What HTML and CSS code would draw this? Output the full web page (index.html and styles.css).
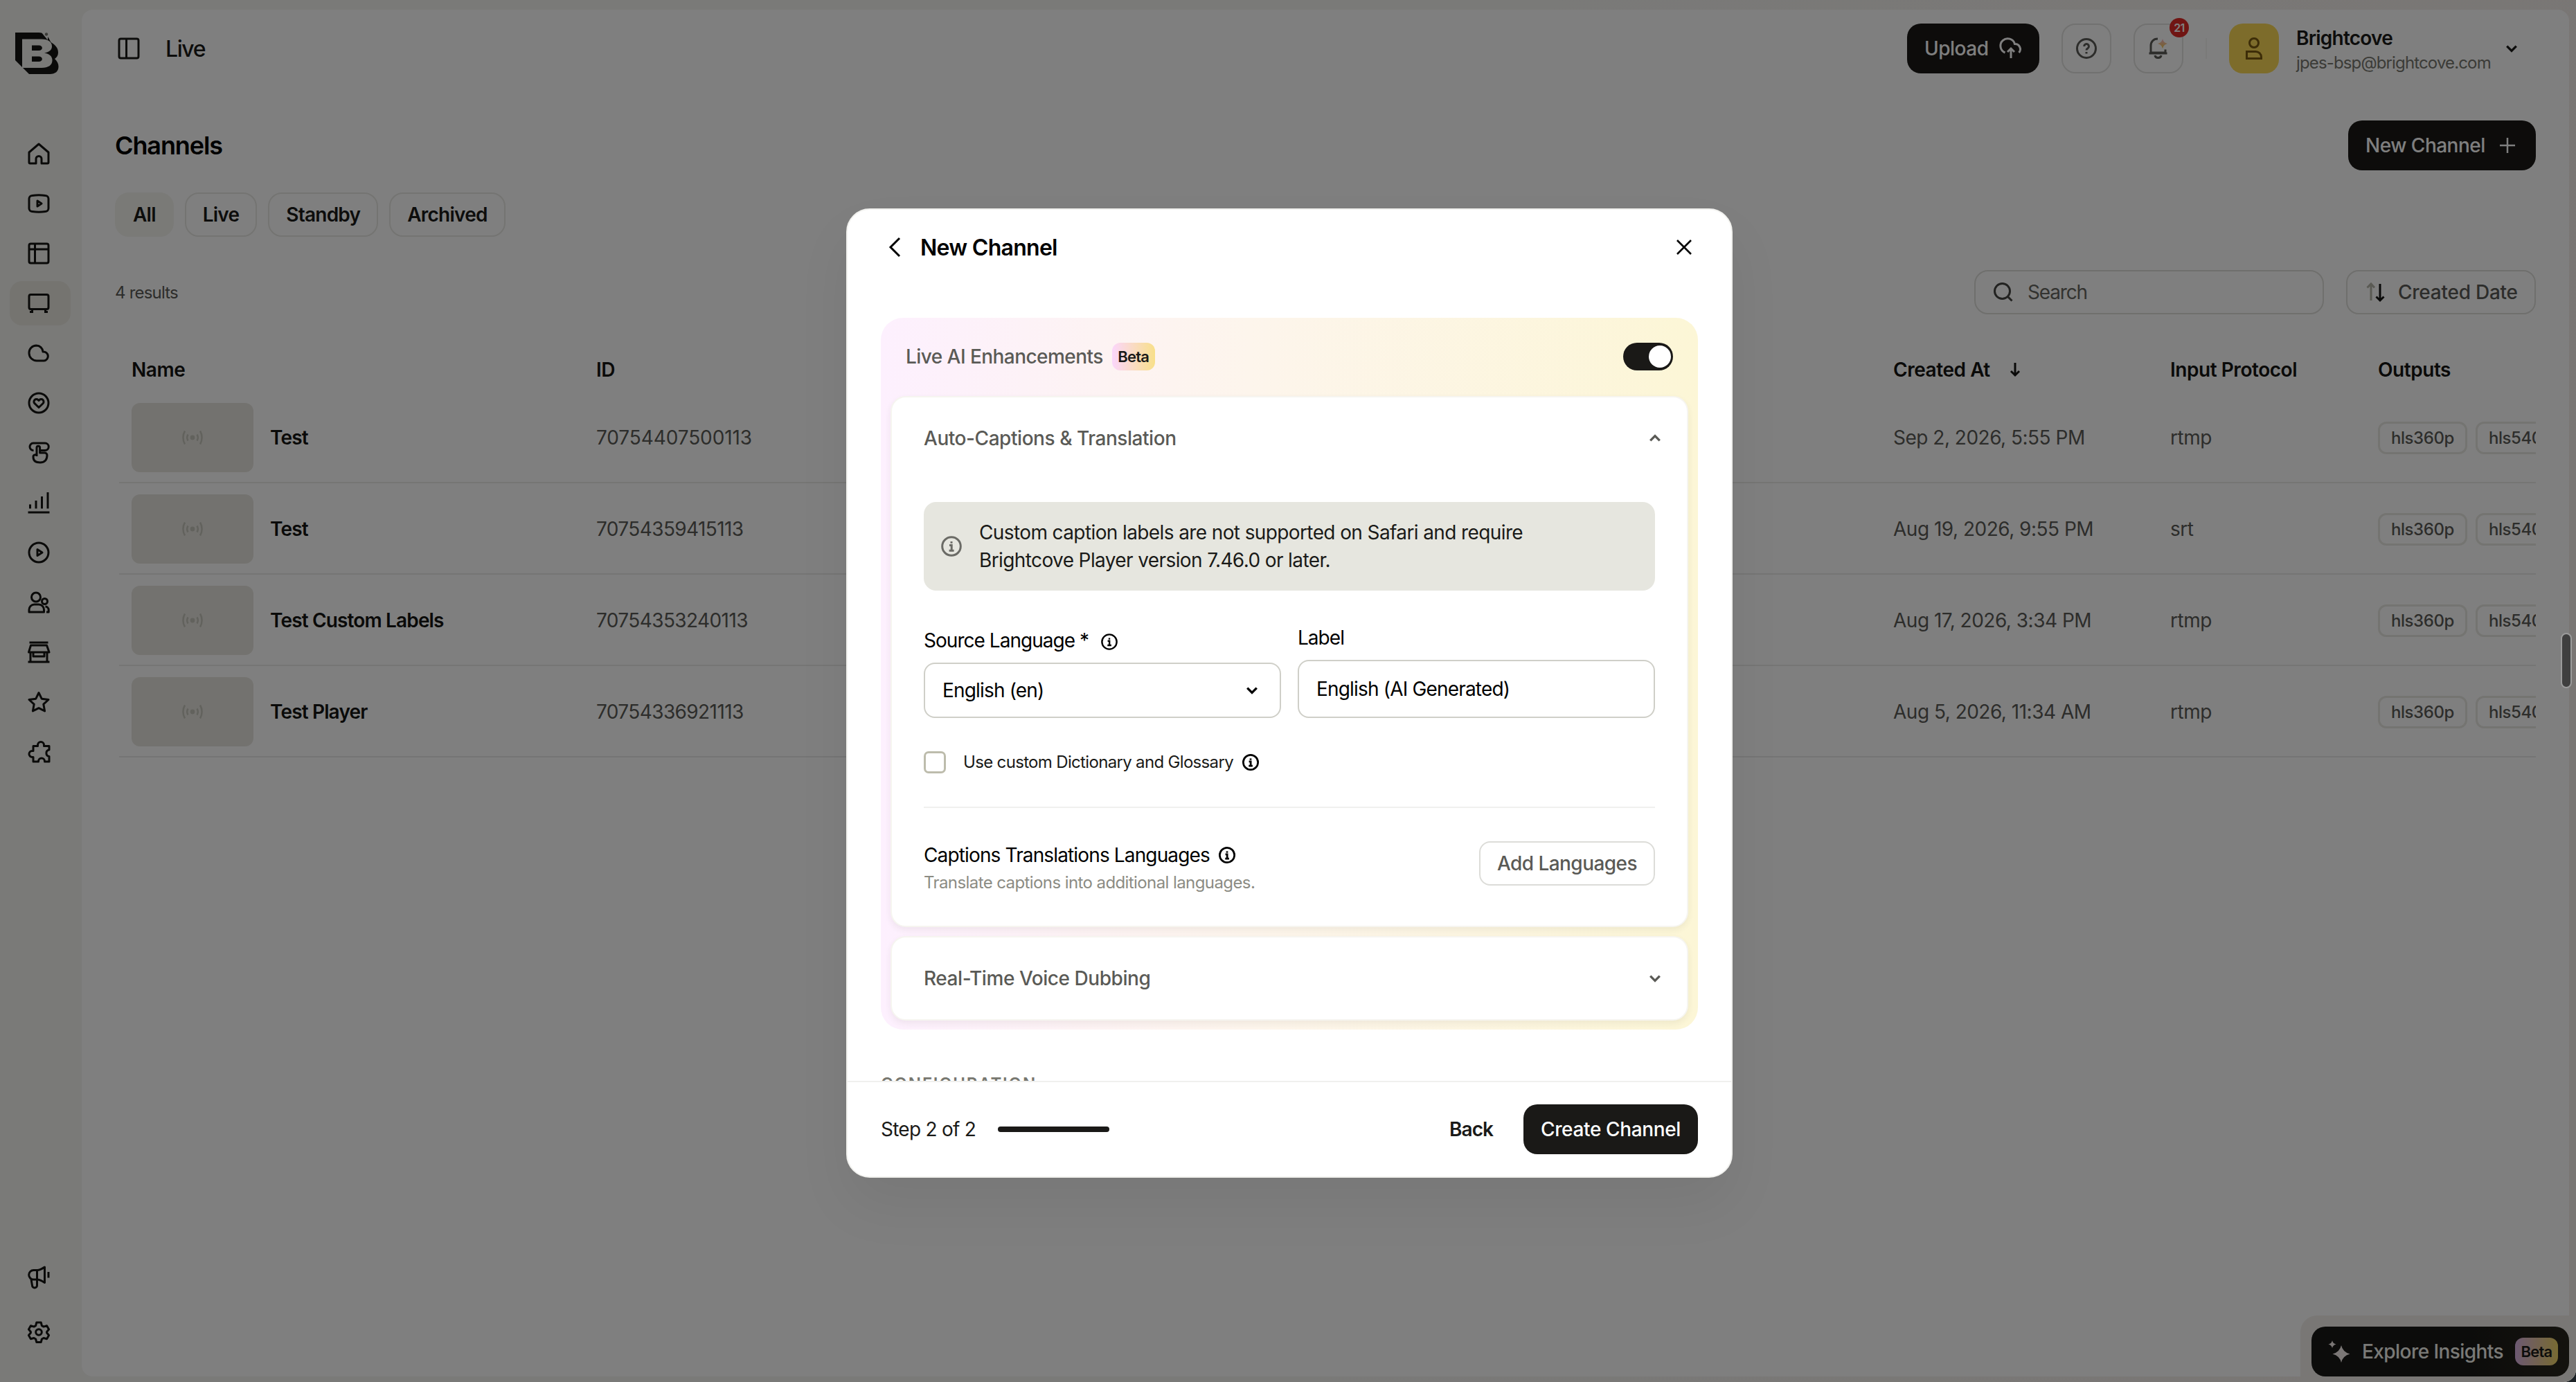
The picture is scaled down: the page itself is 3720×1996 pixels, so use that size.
FILE: index.html
```html
<!DOCTYPE html>
<html lang="en">
<head>
<meta charset="utf-8">
<title>Live</title>
<link rel="stylesheet" href="styles.css">
</head>
<body>
<svg class="defs" aria-hidden="true">
  <defs>
    <linearGradient id="spark" x1="0" y1="0" x2="0" y2="1"><stop offset="0" stop-color="#f5b8d0"/><stop offset="1" stop-color="#f5c84a"/></linearGradient>
    <symbol id="info" viewBox="0 0 30 30"><circle cx="15" cy="15" r="13.3"/><path d="M12 13.5h3.2v7.2M11.6 21.3h7"/><path d="M15 8v2.8"/></symbol>
    <symbol id="down" viewBox="0 0 16 10"><path d="M2 2l6 6 6-6"/></symbol>
    <symbol id="cast" viewBox="0 0 30 22"><circle cx="15" cy="11" r="3.400" fill="currentColor" stroke="none"/><path stroke-width="2.500" d="M8.500 6.500c-1.600 2.700-1.600 6.300 0 9M21.500 6.500c1.600 2.700 1.600 6.300 0 9M4 1.500c-3.400 5.500-3.400 13.500 0 19M26 1.500c3.400 5.500 3.400 13.500 0 19"/></symbol>
  </defs>
</svg>

<div class="app">
  <nav class="sidebar">
    <svg class="logo" viewBox="0 0 63 61">
      <path fill="#141412" d="M0 0H34C40 0 45 3 48 7.500L51.500 14C58 18 62 22 62 29C62 33 60 36 57 38C60.500 41 62.500 45 62.500 49C62.500 56 58 60 50 60H20L0 40Z"/>
      <path fill="#f4f4f1" fill-rule="evenodd" d="M10 9.500H38C48 9.500 53 14 53 20C53 25 49 28.500 42 29.500C49 30.500 53.500 34 53.500 40C53.500 47 48 51 38 51H10ZM24 18.500V26H34C40.500 26 40.500 18.500 34 18.500ZM24 34.500V42H34C40.500 42 40.500 34.500 34 34.500Z"/>
      <path fill="#f4f4f1" d="M38 0h9v11z"/><circle cx="45" cy="2.500" r="2.200" fill="#77776f"/>
    </svg>
    <ul class="nav">
      <li><svg viewBox="0 0 32 32"><path d="M2 14L16 2l14 12v14.500a1.500 1.500 0 0 1-1.500 1.500H20V23.500a4 4 0 0 0-8 0V30H3.500A1.500 1.500 0 0 1 2 28.500Z"/></svg></li>
      <li><svg viewBox="0 0 32 32"><path d="M6.500 4.600q9.500-1.600 19 0A4.500 4.500 0 0 1 30 9v14a4.500 4.500 0 0 1-4.500 4.400q-9.500 1.600-19 0A4.500 4.500 0 0 1 2 23V9a4.500 4.500 0 0 1 4.500-4.400ZM14 12v8l6-4Z"/></svg></li>
      <li><svg viewBox="0 0 32 32"><rect x="2" y="2" width="28" height="28" rx="2.500"/><path d="M2 10h28M10.500 2v28"/></svg></li>
      <li class="on"><svg viewBox="0 0 32 32"><rect x="2" y="3.500" width="28" height="21" rx="2.500"/><path d="M3 28.500h5M24 28.500h5M6.500 25v3M25.500 25v3"/></svg></li>
      <li><svg viewBox="0 0 32 32"><path d="M12.500 5a10.500 10.500 0 0 0-10.500 11a11 11 0 0 0 11 11h10.500a6.500 6.500 0 1 0-1.500-13a9.700 9.700 0 0 0-9.500-9Z"/></svg></li>
      <li><svg viewBox="0 0 32 32"><circle cx="16" cy="16" r="14"/><path d="M16 22.500l-6-5.800a3.600 3.600 0 0 1 5.100-5.100l.9.900.9-.9a3.600 3.600 0 0 1 5.100 5.100Z"/></svg></li>
      <li><svg viewBox="0 0 32 32"><path d="M8.500 12.500A5 5 0 0 1 8 2h17a5 5 0 0 1 0 10.500H19M13 21V8.500a2.300 2.300 0 0 1 4.600 0V16h6.900a3.500 3.500 0 0 1 3.500 3.500c0 7-4 10.500-10 10.500S8 27.500 8 22a3 3 0 0 1 5-2.500"/></svg></li>
      <li><svg viewBox="0 0 32 32"><path d="M0.500 30h31M3.500 18.500v6M12 13v11.500M20.500 7v17.500M29 1v23.500"/></svg></li>
      <li><svg viewBox="0 0 32 32"><circle cx="16" cy="16" r="14"/><path d="M14 11.500v9l7-4.500Z"/></svg></li>
      <li><svg viewBox="0 0 32 32"><circle cx="12" cy="8.500" r="6.500"/><path d="M2 30v-3.500a7.500 7.500 0 0 1 7.500-7.500h6.500a7.500 7.500 0 0 1 7.500 7.500V30Z"/><circle cx="24.500" cy="14.500" r="4"/><path d="M25.500 22a5 5 0 0 1 4.700 5v3H27"/></svg></li>
      <li><svg viewBox="0 0 32 32"><path d="M2.500 2h27M4.500 6h23l3.500 10H1.500ZM4 16v13.500M28 16v13.500M0.500 30h31M8 17v5h16v-5"/></svg></li>
      <li><svg viewBox="0 0 32 32"><path d="M16 2.500l4.200 8.700 9.800 1.300-7.200 6.600 1.800 9.800-8.600-4.200-8.600 4.200 1.800-9.800-7.200-6.600 9.800-1.300Z"/></svg></li>
      <li><svg viewBox="0 0 32 32"><path d="M8 7.500h6.500V6a4.500 4.500 0 0 1 9 0v1.500H31V13a4.800 4.800 0 0 0 0 9.500V30h-6.500v-.5a4.500 4.500 0 0 0-9 0v.5H8v-6.500H6.500a4.500 4.500 0 0 1 0-9H8Z"/></svg></li>
    </ul>
    <ul class="nav foot">
      <li><svg viewBox="0 0 32 32"><path d="M14 6.500H8.500a6.800 6.800 0 0 0 0 13.600H14c3.500 0 6.500 2 10.500 4.400V2c-4 2.500-7 4.500-10.500 4.500ZM13.500 6.500V28.500a3.500 3.500 0 0 1-7 0L5 20M30 9v8.500"/></svg></li>
      <li><svg viewBox="0 0 32 32"><circle cx="16" cy="16" r="4.300"/><path d="M12.800 2h6.400l1.200 4.600 2.600 1.500 4.600-1.300 3 5.300-3 3.400 0 1.600 3 3.400-3 5.300-4.600-1.300-2.600 1.500-1.200 4.600h-6.400l-1.200-4.600-2.600-1.500-4.600 1.300-3-5.300 3-3.400 0-1.600-3-3.400 3-5.300 4.600 1.300 2.600-1.500Z"/></svg></li>
    </ul>
  </nav>

  <main class="panel">
    <header class="top">
      <svg class="ic32" viewBox="0 0 32 32"><rect x="2" y="2" width="28" height="28" rx="2.500"/><path d="M12.500 2v28"/></svg>
      <span class="crumb">Live</span>
      <div class="top-right">
        <button class="btn dark upload"><span>Upload</span><svg viewBox="0 0 32 32" width="32" height="32"><path d="M7.500 22A10.500 10.500 0 1 1 21.500 9.500A7.500 7.500 0 0 1 27.500 22M16 30V16.500M11 21l5-5 5 5"/></svg></button>
        <button class="sq help"><svg viewBox="0 0 30 30" width="30" height="30"><circle cx="15" cy="15" r="13.500"/><path d="M11.700 12a3.400 3.400 0 1 1 5.200 2.800q-1.900 1-1.900 2.700M15 20v2.500"/></svg></button>
        <button class="sq bell"><svg viewBox="0 0 32 32" width="32" height="32"><path d="M15 2C8.500 2 5 6.500 5 12V22H26V17.500M2.500 23H28.500M11 26c.5 4.500 8.500 4.500 9 0"/><path fill="url(#spark)" stroke="none" d="M22 2q1.300 5.700 7 7-5.700 1.300-7 7-1.300-5.700-7-7 5.700-1.300 7-7Z"/></svg><span class="count">21</span></button>
        <span class="vline"></span>
        <div class="account">
          <span class="avatar"><svg viewBox="0 0 32 32" width="32" height="32"><circle cx="16" cy="8" r="6.500"/><path d="M5.500 30.500V20.500h12.500a8 8 0 0 1 8.500 8v2Z"/></svg></span>
          <span class="who"><b>Brightcove</b><i>jpes-bsp@brightcove.com</i></span>
          <svg class="chev" width="18" height="12"><use href="#down"/></svg>
        </div>
      </div>
    </header>

    <section class="head">
      <h1>Channels</h1>
      <button class="btn dark newch"><span>New Channel</span><svg viewBox="0 0 24 24" width="24" height="24"><path d="M12 1v22M1 12h22"/></svg></button>
    </section>

    <div class="chips">
      <span class="chip sel">All</span><span class="chip">Live</span><span class="chip">Standby</span><span class="chip">Archived</span>
    </div>

    <div class="tools">
      <span class="results">4 results</span>
      <div class="tools-right">
        <label class="search"><svg viewBox="0 0 30 30" width="30" height="30"><circle cx="13.500" cy="13.500" r="11"/><path d="M21.500 21.500l6 6"/></svg><span>Search</span></label>
        <button class="sort"><svg viewBox="0 0 28 30" width="28" height="30"><path class="dim" d="M7 27V3M1.500 8.500L7 3l5 5.500"/><path class="blk" d="M20 3v24M14.500 21.500L20 27l5.500-5.500"/></svg><span>Created Date</span></button>
      </div>
    </div>

    <div class="table">
      <div class="row th">
        <span>Name</span><span>ID</span><span class="sorted">Created At<svg viewBox="0 0 16 22" width="16" height="22"><path d="M8 1v18M2 13l6 6 6-6"/></svg></span><span>Input Protocol</span><span>Outputs</span>
      </div>
      <div class="row">
        <span class="name"><i class="thumb"><svg width="30" height="22"><use href="#cast"/></svg></i>Test</span><span class="id">70754407500113</span><span>Sep 2, 2026, 5:55 PM</span><span>rtmp</span><span class="tags"><em>hls360p</em><em>hls540p</em></span>
      </div>
      <div class="row">
        <span class="name"><i class="thumb"><svg width="30" height="22"><use href="#cast"/></svg></i>Test</span><span class="id narrow">70754359415113</span><span>Aug 19, 2026, 9:55 PM</span><span>srt</span><span class="tags"><em>hls360p</em><em>hls540p</em></span>
      </div>
      <div class="row">
        <span class="name"><i class="thumb"><svg width="30" height="22"><use href="#cast"/></svg></i>Test Custom Labels</span><span class="id narrow">70754353240113</span><span>Aug 17, 2026, 3:34 PM</span><span>rtmp</span><span class="tags"><em>hls360p</em><em>hls540p</em></span>
      </div>
      <div class="row">
        <span class="name"><i class="thumb"><svg width="30" height="22"><use href="#cast"/></svg></i>Test Player</span><span class="id narrow">70754336921113</span><span>Aug 5, 2026, 11:34 AM</span><span>rtmp</span><span class="tags"><em>hls360p</em><em>hls540p</em></span>
      </div>
    </div>
  </main>
</div>

<div class="explore-dock">
  <button class="explore"><svg viewBox="0 0 32 32" width="32" height="32"><path d="M19 7q2.200 9.800 12.500 12.500-10.300 2.700-12.500 12.500-2.200-9.800-12.500-12.500Q16.800 16.800 19 7ZM6 0q1 4.500 5.500 5.500-4.500 1-5.500 5.500-1-4.500-5.500-5.500Q5 4.500 6 0Z"/></svg><span>Explore Insights</span><span class="beta">Beta</span></button>
</div>

<div class="overlay"></div>
<div class="scroll-thumb"></div>

<div class="modal">
  <header class="m-head">
    <svg viewBox="0 0 20 32" width="20" height="32"><path d="M17 3L4 16l13 13"/></svg>
    <h2>New Channel</h2>
    <svg class="x" viewBox="0 0 24 24" width="24" height="24"><path d="M2 2l20 20M22 2L2 22"/></svg>
  </header>
  <div class="m-body">
    <section class="ai">
      <div class="ai-head"><span>Live AI Enhancements</span><span class="beta">Beta</span><span class="toggle"></span></div>
      <div class="card">
        <div class="card-head"><span>Auto-Captions &amp; Translation</span><svg class="flip" width="18" height="12"><use href="#down"/></svg></div>
        <div class="alert"><svg width="30" height="30"><use href="#info"/></svg><p>Custom caption labels are not supported on Safari and require<br>Brightcove Player version 7.46.0 or later.</p></div>
        <div class="fields">
          <div class="field"><label>Source Language *<svg width="24" height="24"><use href="#info"/></svg></label><div class="ctl select">English (en)<svg width="18" height="12"><use href="#down"/></svg></div></div>
          <div class="field"><label class="lift">Label</label><div class="ctl input">English (AI Generated)</div></div>
        </div>
        <div class="check"><i></i>Use custom Dictionary and Glossary<svg width="24" height="24"><use href="#info"/></svg></div>
        <div class="langs">
          <div><div class="l1">Captions Translations Languages<svg width="24" height="24"><use href="#info"/></svg></div><div class="l2">Translate captions into additional languages.</div></div>
          <button class="add">Add Languages</button>
        </div>
      </div>
      <div class="card closed"><div class="card-head"><span>Real-Time Voice Dubbing</span><svg width="18" height="12"><use href="#down"/></svg></div></div>
    </section>
    <h3>CONFIGURATION</h3>
  </div>
  <footer class="m-foot">
    <span class="step">Step 2 of 2</span><span class="bar"></span>
    <span class="back">Back</span>
    <button class="btn dark create">Create Channel</button>
  </footer>
</div>
</body>
</html>
```
FILE: styles.css
```css
* { box-sizing: border-box; }
html { background: #1c2226; }
body { margin: 0; width: 3720px; height: 1996px; overflow: hidden; position: relative; font: 400 28px/40px Inter, "Liberation Sans", sans-serif; letter-spacing: -.5px; color: #1a1a18; background: linear-gradient(100deg, #f4f4f1 55%, #f3ece8 100%); border-bottom-right-radius: 18px; }
i, em { font-style: normal; }
h1, h2, h3, p, ul { margin: 0; padding: 0; list-style: none; font-weight: inherit; font-size: inherit; }
button { font: inherit; letter-spacing: inherit; color: inherit; border: 0; padding: 0; background: none; }
svg { fill: none; stroke: currentColor; stroke-width: 3; flex: none; display: block; overflow: visible; }
.defs { position: absolute; width: 0; height: 0; }

.app { display: flex; width: 3720px; height: 1996px; padding: 14px 10px 8px 0; }
.sidebar { width: 118px; display: flex; flex-direction: column; padding: 33px 0 24px 14px; }
.logo { width: 63px; height: 61px; margin-left: 8px; stroke: none; }
.nav { margin-top: 82px; }
.nav li { width: 88px; height: 64px; margin-bottom: 8px; border-radius: 18px; display: flex; align-items: center; padding-left: 26px; }
.nav li.on { background: #ebe9e0; }
.nav svg { width: 32px; height: 32px; stroke-linejoin: round; color: #141412; }
.nav.foot { margin-top: auto; }
.nav.foot li + li { margin-top: 16px; }

.panel { flex: 1; background: #fff; border-radius: 16px 16px 36px 16px; padding: 0 48px; min-width: 0; }
.top { display: flex; align-items: center; height: 112px; padding-left: 6px; }
.ic32 { width: 32px; height: 32px; margin-left: -2px; }
.crumb { font-size: 32px; font-weight: 500; margin-left: 37px; padding-top: 2px; letter-spacing: -1.4px; }
.top-right { margin-left: auto; display: flex; align-items: center; padding-right: 26px; }
.btn { display: flex; align-items: center; justify-content: center; height: 72px; border-radius: 20px; font-weight: 500; color: #fff; }
.dark { background: #1a1917; }
.upload { width: 191px; gap: 17px; justify-content: flex-start; padding-left: 25px; }
.newch { width: 271px; gap: 20px; justify-content: flex-start; padding-left: 25px; }
.newch svg { stroke-width: 2.500; }
.sq { width: 72px; height: 72px; margin-left: 32px; border: 2px solid #e2e2e0; border-radius: 20px; display: flex; align-items: center; justify-content: center; color: #5a5a56; position: relative; }
.count { position: absolute; right: -10px; top: -10px; width: 28px; height: 28px; border-radius: 50%; background: #e02a26; color: #fff; font-size: 16px; font-weight: 600; line-height: 28px; text-align: center; }
.vline { width: 2px; height: 30px; background: #f4f4f2; margin-left: 32px; }
.account { display: flex; align-items: center; margin-left: 32px; }
.avatar { width: 72px; height: 72px; border-radius: 20px; background: #fbd956; color: #7a5a10; display: flex; align-items: center; justify-content: center; }
.who { margin-left: 25px; width: 281px; display: flex; flex-direction: column; padding-top: 5px; }
.who b { font-weight: 600; font-size: 28px; line-height: 36px; letter-spacing: -.78px; }
.who i { font-size: 24px; line-height: 36px; color: #77776f; white-space: nowrap; letter-spacing: -.86px; }
.chev { margin-left: 21px; }

.head { display: flex; justify-content: space-between; align-items: center; height: 168px; }
h1 { font-size: 36px; font-weight: 600; color: #000; letter-spacing: -1.1px; }
.chips { display: flex; gap: 16px; height: 64px; margin-top: -16px; letter-spacing: -.77px; }
.chip { height: 64px; border: 2px solid #e8e8e4; border-radius: 20px; padding: 0 24px; line-height: 60px; font-weight: 600; }
.chip.sel { background: #f4f4ef; border-color: #f4f4ef; }
.tools { display: flex; justify-content: space-between; align-items: center; margin-top: 48px; height: 64px; }
.results { font-size: 24px; color: #5a5a56; letter-spacing: -.8px; padding-top: 1px; }
.tools-right { display: flex; gap: 32px; }
.search { width: 505px; height: 64px; border: 2px solid #dededa; border-radius: 20px; display: flex; align-items: center; gap: 20px; padding-left: 25px; color: #666660; letter-spacing: -1.15px; }
.search svg { color: #444441; }
.sort { width: 274px; height: 64px; border: 2px solid #dededa; border-radius: 18px; display: flex; align-items: center; gap: 18px; padding-left: 27px; font-weight: 500; color: #5a5a56; letter-spacing: -.25px; }
.sort .dim { stroke: #b5b5a8; }
.sort .blk { stroke: #141412; }

.table { margin-left: 6px; margin-top: 48px; overflow: hidden; color: #5a5a56; }
.row { display: grid; grid-template-columns: 689px 1873px 400px 300px 228px; height: 132px; align-items: center; border-bottom: 2px solid #eaeae8; padding-top: 2px; }
.row > span:first-child { padding-left: 18px; }
.row.th { height: 64px; padding: 0; border: 0; font-weight: 600; color: #141412; letter-spacing: -.45px; }
.sorted { display: flex; align-items: center; gap: 28px; }
.name { display: flex; align-items: center; gap: 24px; color: #141412; font-weight: 600; letter-spacing: -.85px; }
.id { letter-spacing: -.1px; }
.id.narrow { letter-spacing: -.6px; }
.thumb { width: 176px; height: 100px; border-radius: 12px; background: #e7e5df; color: #c4c4ba; display: flex; align-items: center; justify-content: center; }
.tags { display: flex; gap: 12px; overflow: hidden; font-size: 24px; font-weight: 500; letter-spacing: -.43px; }
.tags em { flex: none; height: 47px; line-height: 41px; border: 3px solid #e9e8e2; border-radius: 12px; padding: 0 16px; }

.explore-dock { position: absolute; right: 0; bottom: 0; width: 398px; height: 96px; padding: 16px 10px 8px 16px; background: #f2efea; border-top-left-radius: 24px; border-bottom-right-radius: 18px; }
.explore { width: 372px; height: 72px; border-radius: 20px; display: flex; align-items: center; background: linear-gradient(90deg, #181816 60%, #29261d); color: #f4f4ef; font-weight: 500; padding-left: 24px; white-space: nowrap; letter-spacing: -.57px; }
.explore svg { fill: #f7efec; stroke: none; }
.explore > span:nth-child(2) { width: 206px; margin-left: 17px; text-align: left; }
.beta { flex: none; width: 62px; height: 40px; border-radius: 12px; background: linear-gradient(90deg, #fbd6fb, #f8e08a); color: #1a1a18; font-size: 22px; font-weight: 600; line-height: 40px; text-align: center; letter-spacing: -.8px; }
.explore .beta { margin-left: 15px; background: linear-gradient(90deg, #d9b2e4, #f0d565); }

.overlay { position: absolute; inset: 0; background: rgba(0, 0, 0, .5); }
.scroll-thumb { position: absolute; right: 6px; top: 914px; width: 16px; height: 80px; border: 2px solid #9b9b9b; border-radius: 8px; background: #3f3f3f; }

.modal { position: absolute; left: 1222px; top: 301px; width: 1280px; height: 1400px; border: 2px solid #f1f1ee; border-radius: 34px; background: #fff; display: flex; flex-direction: column; overflow: hidden; box-shadow: 0 40px 80px rgba(0, 0, 0, .06); }
.m-head { height: 108px; flex: none; display: flex; align-items: center; padding: 0 56px 0 58px; color: #000; }
.m-head h2 { font-size: 32px; font-weight: 600; margin-left: 27px; letter-spacing: -.72px; padding-top: 2px; }
.m-head .x { margin-left: auto; stroke-width: 2.600; }
.m-body { flex: 1; overflow: hidden; padding: 48px 48px 0; }
.ai { height: 1028px; border-radius: 32px; padding: 0 14px; background: linear-gradient(90deg, #fdf0fe, #fdf5ec 45%, #fcf6d6); }
.ai-head { height: 113px; display: flex; align-items: center; padding: 0 22px 1px; font-weight: 500; color: #5a5a56; letter-spacing: -.55px; }
.ai-head .beta { margin-left: 13px; }
.toggle { margin-left: auto; width: 72px; height: 40px; border-radius: 20px; background: #1a1917; padding: 4px 3px; display: flex; justify-content: flex-end; }
.toggle::after { content: ""; width: 32px; height: 32px; border-radius: 50%; background: #fff; }
.card { height: 767px; background: #fff; border: 2px solid #f6f5f0; border-radius: 22px; padding: 0 46px; box-shadow: 0 4px 10px rgba(60, 60, 40, .07); }
.card.closed { height: 122px; margin-top: 13px; }
.card-head { height: 118px; display: flex; align-items: center; justify-content: space-between; font-weight: 500; color: #5a5a56; letter-spacing: -.45px; }
.card-head svg { margin-right: -9px; }
.flip { transform: scaleY(-1); }
.alert { margin-top: 33px; height: 128px; border-radius: 18px; background: #e6e6df; display: flex; align-items: center; padding-left: 25px; gap: 25px; letter-spacing: -.61px; }
.alert svg { color: #6b6b66; }
.fields { display: flex; gap: 24px; margin-top: 50px; height: 134px; color: #000; }
.field { width: 516px; display: flex; flex-direction: column; }
.field label { height: 54px; padding-top: 2px; display: flex; gap: 18px; letter-spacing: -.97px; }
.field label svg { margin-top: 10px; }
.field label.lift { height: 52px; padding-top: 0; margin-top: -2px; }
.ctl { flex: 1; border: 2px solid #cfcfc8; border-radius: 16px; padding: 0 25px; display: flex; align-items: center; justify-content: space-between; letter-spacing: -.82px; }
.select svg { margin-right: 6px; }
.check { display: flex; align-items: center; margin-top: 48px; height: 32px; font-size: 24px; letter-spacing: -.67px; }
.check i { width: 32px; height: 32px; border: 3px solid #bdbcac; border-radius: 7px; margin-right: 25px; }
.check svg, .l1 svg { margin-left: 13px; color: #000; stroke-width: 3.400; }
.langs { margin-top: 48px; border-top: 2px solid #f0f0ee; padding-top: 48px; display: flex; justify-content: space-between; align-items: flex-start; }
.l1 { display: flex; align-items: center; color: #000; height: 40px; letter-spacing: -.86px; }
.l2 { font-size: 24px; color: #8c8c84; line-height: 40px; letter-spacing: -.59px; }
.add { width: 254px; height: 64px; border: 2px solid #dcdcd8; border-radius: 16px; font-weight: 500; color: #5a5a56; letter-spacing: -.56px; }
h3 { margin-top: 59px; font-size: 24px; font-weight: 600; color: #77776f; line-height: 40px; letter-spacing: 1.850px; }
.m-foot { height: 138px; flex: none; border-top: 2px solid #f0f0ee; display: flex; align-items: center; padding: 0 48px; }
.step { letter-spacing: -.75px; }
.bar { width: 161px; height: 8px; border-radius: 4px; background: #1a1917; margin-left: 32px; }
.back { margin-left: auto; font-weight: 600; letter-spacing: -.95px; }
.create { width: 252px; margin-left: 44px; letter-spacing: -.36px; }
```
